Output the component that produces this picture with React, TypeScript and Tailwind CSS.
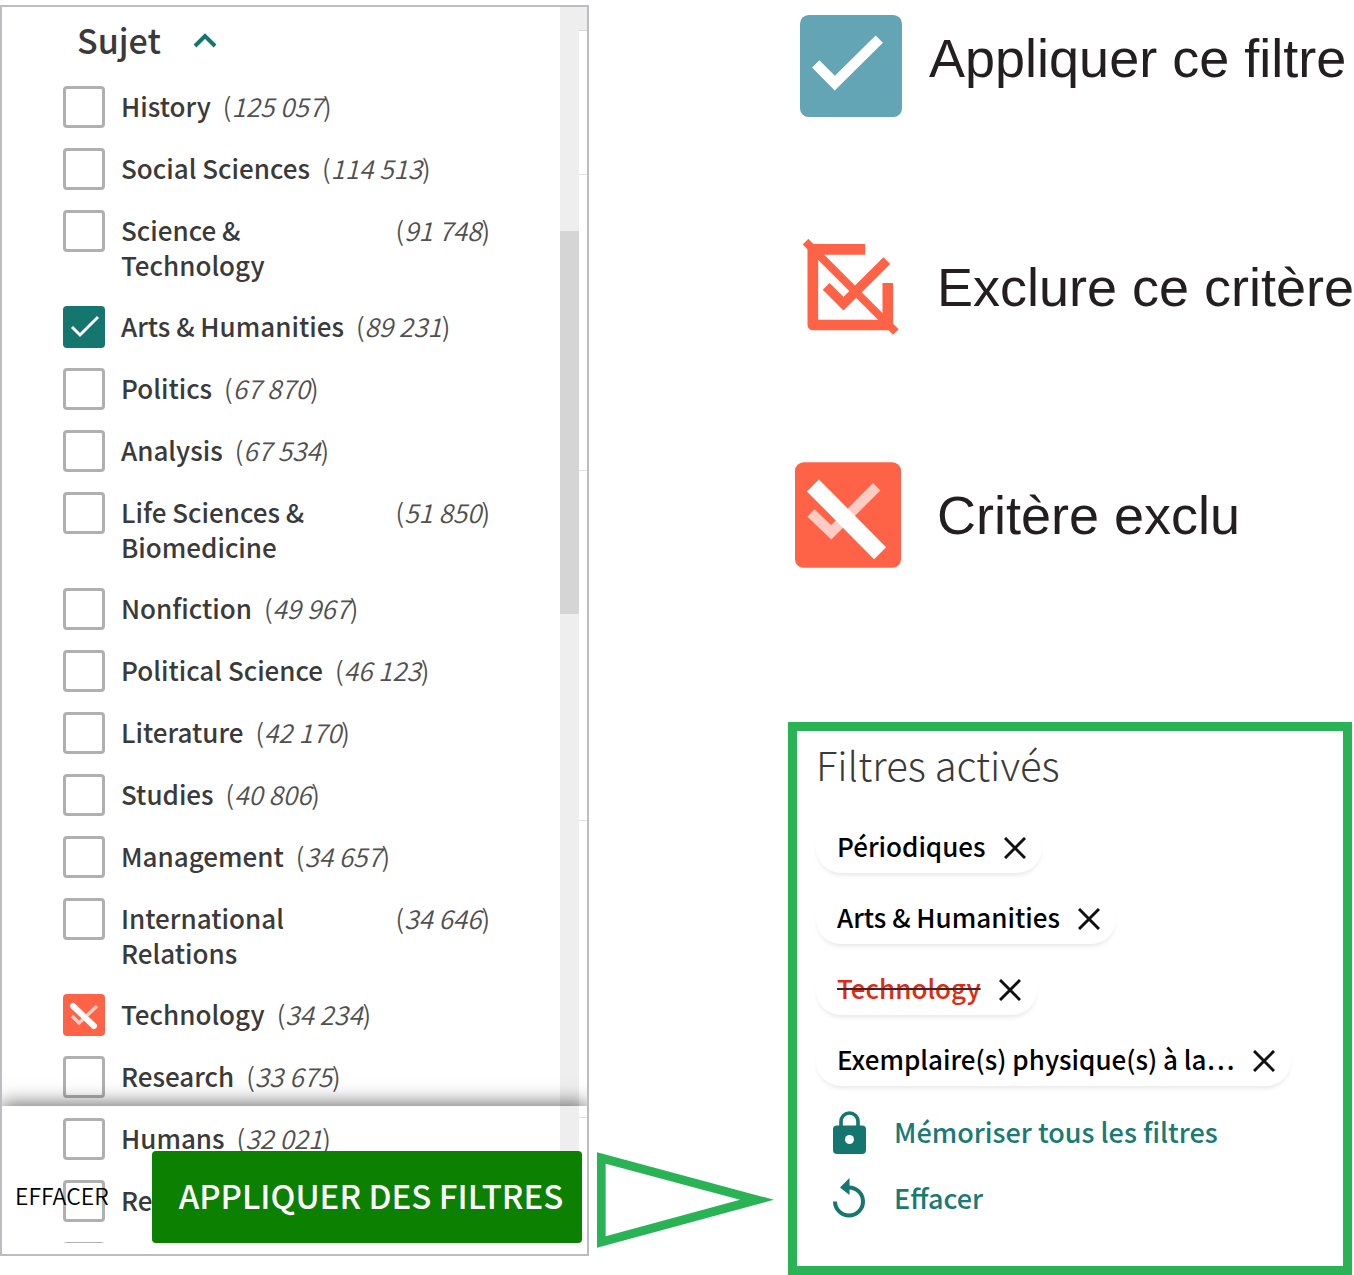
import React from "react";

type CheckState = "none" | "included" | "excluded";

type Subject = {
  id: string;
  name: string;
  count?: string;
  state?: CheckState;
};

const subjects: Subject[] = [
  { id: "history", name: "History", count: "125 057" },
  { id: "social", name: "Social Sciences", count: "114 513" },
  { id: "science", name: "Science &\nTechnology", count: "91 748" },
  { id: "arts", name: "Arts & Humanities", count: "89 231", state: "included" },
  { id: "politics", name: "Politics", count: "67 870" },
  { id: "analysis", name: "Analysis", count: "67 534" },
  { id: "life", name: "Life Sciences &\nBiomedicine", count: "51 850" },
  { id: "nonfiction", name: "Nonfiction", count: "49 967" },
  { id: "polsci", name: "Political Science", count: "46 123" },
  { id: "literature", name: "Literature", count: "42 170" },
  { id: "studies", name: "Studies", count: "40 806" },
  { id: "management", name: "Management", count: "34 657" },
  { id: "international", name: "International\nRelations", count: "34 646" },
  { id: "technology", name: "Technology", count: "34 234", state: "excluded" },
  { id: "research", name: "Research", count: "33 675" },
  { id: "humans", name: "Humans", count: "32 021" },
  { id: "re", name: "Re" },
  { id: "next", name: "" },
];

const activeFilters = [
  { name: "Périodiques", excluded: false },
  { name: "Arts & Humanities", excluded: false },
  { name: "Technology", excluded: true },
  { name: "Exemplaire(s) physique(s) à la…", excluded: false },
];

function SubjectRow({ id, name, count, state = "none" }: Subject) {
  const wraps = name.includes("\n");
  return (
    <li className="flex w-[427px] items-start">
      <span className="grid shrink-0">
        <input
          id={id}
          type="checkbox"
          aria-label={name || "Sujet suivant"}
          defaultChecked={state !== "none"}
          className={
            state === "included"
              ? "col-start-1 row-start-1 size-[42px] appearance-none rounded-[4px] bg-[#15756f]"
              : state === "excluded"
                ? "col-start-1 row-start-1 size-[42px] appearance-none rounded-[4px] bg-[#ff6347]"
                : "col-start-1 row-start-1 size-[42px] appearance-none rounded-[4px] border-3 border-[#b0b0b0] bg-white"
          }
        />
        {state === "included" && (
          <svg viewBox="0 0 42 42" className="pointer-events-none col-start-1 row-start-1 size-[42px]" fill="none" aria-hidden="true">
            <path d="M9 21 L17 29 L35 11" stroke="#fff" strokeWidth="3" />
          </svg>
        )}
        {state === "excluded" && (
          <svg viewBox="0 0 42 42" className="pointer-events-none col-start-1 row-start-1 size-[42px]" fill="none" aria-hidden="true">
            <path d="M9 22 L16 29 L34 12" stroke="#ffccc2" strokeWidth="3.4" />
            <path d="M10 12 L31 32" stroke="#fff" strokeWidth="6" strokeLinecap="round" />
          </svg>
        )}
      </span>
      <label
        htmlFor={id}
        className="ml-4 flex grow gap-3 pt-[2px] pb-1 text-[26px] leading-[35px] whitespace-pre text-[#3a3a3a]"
      >
        <span className="font-medium">{name}</span>
        {count && (
          <span className={wraps ? "ml-auto font-[350] text-[#505050]" : "font-[350] text-[#505050]"}>
            (<i>{count}</i>)
          </span>
        )}
      </label>
    </li>
  );
}

function SubjectPanel() {
  return (
    <section className="relative mt-[5px] mb-[19px] flex min-h-0 flex-col overflow-hidden border-2 border-[#bcbdc0] pb-[11px]">
      <div className="flex min-h-0 flex-1 overflow-hidden">
        <div className="flex-1 pl-[61px]">
          <h2 className="mb-[22px] pt-2 pl-[14px]">
            <button type="button" aria-expanded="true" className="flex items-center text-[34px] leading-[49px] font-medium text-[#3a3a3a]">
              Sujet
              <svg viewBox="0 0 24 16" className="ml-8 h-4 w-6" fill="none" aria-hidden="true">
                <path d="M2 14 L12 4 L22 14" stroke="#15756f" strokeWidth="4" />
              </svg>
            </button>
          </h2>
          <ul className="flex flex-col gap-5">
            {subjects.map((s) => (
              <SubjectRow key={s.id} {...s} />
            ))}
          </ul>
        </div>
        <div className="w-[19px] bg-[#eeeeee] pt-56" aria-hidden="true">
          <div className="h-[383px] bg-[#d5d5d5]" />
        </div>
        <div className="flex w-2 flex-col bg-white" aria-hidden="true">
          <div className="h-6 border-b border-[#d8d8d8] bg-[#ededed]" />
          <div className="h-36 border-b border-[#e2e2e2]" />
          <div className="h-[296px] border-b border-[#e2e2e2]" />
          <div className="h-[350px] border-b border-[#e2e2e2]" />
          <div className="h-[297px] border-b border-[#e2e2e2]" />
        </div>
      </div>
      <div className="absolute inset-x-0 bottom-0 flex h-[148px] items-end justify-between pr-[5px] pb-[11px] pl-[13px] shadow-[0_-2px_18px_1px_rgba(0,0,0,0.55)]">
        <button type="button" className="h-[92px] pb-[3px] text-[23px] font-[350] text-black">
          EFFACER
        </button>
        <button type="button" className="h-[92px] w-[430px] rounded-[4px] bg-[#0c8001] pb-[3px] pl-2 text-[33px] font-medium whitespace-nowrap text-white">
          APPLIQUER DES FILTRES
        </button>
      </div>
    </section>
  );
}

function Legend() {
  return (
    <ul className="flex flex-col pt-3 pl-px font-['Liberation_Sans',Arial,sans-serif] text-[54px] leading-[60px] whitespace-nowrap text-[#231f20]">
      <li className="flex h-[108px] items-center">
        <svg viewBox="60 43 305 305" className="ml-[11px] size-[102px] shrink-0" fill="none" aria-hidden="true">
          <rect x="60" y="43" width="305" height="305" rx="26" fill="#63a4b5" />
          <path d="M107 189 L164 247 L297 115" stroke="#fff" strokeWidth="31" />
        </svg>
        <span className="ml-[27px] pb-4">Appliquer ce filtre</span>
      </li>
      <li className="mt-[113px] flex h-[108px] items-center">
        <svg viewBox="66 57 290 288" className="ml-[13px] h-24 w-[97px] shrink-0" fill="none" stroke="#ff6347" aria-hidden="true">
          <path d="M255 88 H98 V315 H323 V189" strokeWidth="32" strokeLinejoin="round" />
          <path d="M76 65 L347 336" strokeWidth="24" />
          <path d="M138 199 L190 251 L320 122" strokeWidth="29" />
        </svg>
        <span className="ml-[38px]">Exclure ce critère</span>
      </li>
      <li className="mt-[120px] flex h-[108px] items-center">
        <svg viewBox="44 36 319 318" className="ml-[6px] size-[106px] shrink-0" fill="none" aria-hidden="true">
          <rect x="44" y="36" width="319" height="318" rx="26" fill="#ff6347" />
          <path d="M92 189 L153 247 L290 110" stroke="#ffccc4" strokeWidth="31" />
          <path d="M98 106 L300 310" stroke="#fff" strokeWidth="51" />
        </svg>
        <span className="ml-9">Critère exclu</span>
      </li>
    </ul>
  );
}

function ActiveFilters() {
  return (
    <section className="mr-[2px] flex-1 border-9 border-[#2ab355] bg-white pl-[19px]">
      <h2 className="pt-[3px] pb-[29px] text-[40px] leading-[60px] font-light text-[#3a3a3a]">Filtres activés</h2>
      <ul className="flex flex-col items-start gap-[21px]">
        {activeFilters.map((f) => (
          <li
            key={f.name}
            className="flex h-[50px] items-center gap-[18px] rounded-full bg-white pr-4 pl-[21px] text-[26px] font-medium whitespace-nowrap text-black shadow-[0_4px_5px_-2px_rgba(0,0,0,0.1)]"
          >
            <span className={f.excluded ? "pb-[6px] text-[#e02a12] line-through decoration-[#4a2020] decoration-2" : "pb-[6px]"}>{f.name}</span>
            <button type="button" aria-label={"Retirer " + f.name}>
              <svg viewBox="0 0 22 22" className="size-[22px]" fill="none" aria-hidden="true">
                <path d="M1 1 L21 21 M21 1 L1 21" stroke="#111" strokeWidth="3" />
              </svg>
            </button>
          </li>
        ))}
      </ul>
      <div className="mt-6 flex flex-col items-start gap-[22px] pl-[17px] text-[27px] leading-[44px] font-medium text-[#1a7a74]">
        <button type="button" className="flex items-center gap-7">
          <svg viewBox="0 0 33 44" className="h-11 w-[33px]" fill="none" aria-hidden="true">
            <path d="M8 17 V11.5 A8.5 8.5 0 0 1 25 11.5 V17" stroke="#15756f" strokeWidth="3.6" />
            <rect x="0" y="15.5" width="33" height="28.5" rx="4" fill="#15756f" />
            <circle cx="16.5" cy="29.5" r="4.5" fill="#fff" />
          </svg>
          Mémoriser tous les filtres
        </button>
        <button type="button" className="flex items-center gap-7">
          <svg viewBox="0 0 33 44" className="h-11 w-[33px]" fill="none" aria-hidden="true">
            <path d="M16 11.5 A14 14 0 1 1 2 25.5" stroke="#15756f" strokeWidth="4" />
            <path d="M7 11.5 L16.5 2 V19 Z" fill="#15756f" />
          </svg>
          Effacer
        </button>
      </div>
    </section>
  );
}

export default function App() {
  return (
    <main className="grid h-screen grid-cols-[minmax(0,589fr)_minmax(0,199fr)_minmax(0,566fr)] grid-rows-[minmax(0,1fr)] overflow-hidden bg-white font-['Noto_Sans_CJK_SC','Noto_Sans',sans-serif]">
      <SubjectPanel />
      <svg viewBox="21 36 531 287" className="mb-[27px] ml-2 h-24 w-[177px] self-end" aria-hidden="true">
        <path fillRule="evenodd" fill="#2ab355" d="M21 36 L552 179 L21 323 Z M47 71 L450 179 L47 288 Z" />
      </svg>
      <div className="flex min-h-0 flex-col gap-[153px]">
        <Legend />
        <ActiveFilters />
      </div>
    </main>
  );
}
